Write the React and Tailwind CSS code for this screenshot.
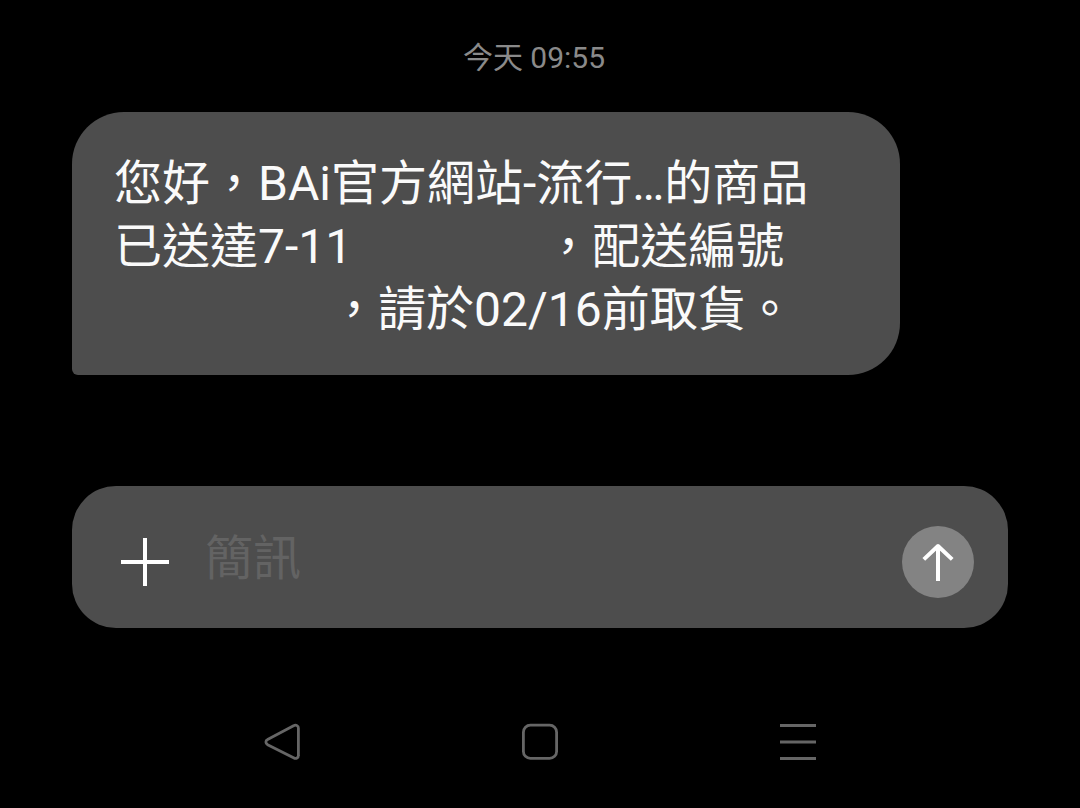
import React from 'react';

const PlusIcon = () => (
  <svg className="size-12" viewBox="0 0 48 48" fill="none" stroke="currentColor" strokeWidth="4" aria-hidden="true">
    <path d="M24 0v48M0 24h48" />
  </svg>
);

const ArrowUpIcon = () => (
  <svg className="size-10" viewBox="0 0 40 40" fill="none" stroke="currentColor" strokeWidth="4" aria-hidden="true">
    <path d="M20 39V4" />
    <path d="M5.8 17.4L20 4l14.2 13.4" strokeLinejoin="round" />
  </svg>
);

const BackIcon = () => (
  <svg className="size-10" viewBox="0 0 40 40" fill="none" stroke="currentColor" strokeWidth="2.8" aria-hidden="true">
    <path d="M32 3.6L5.6 17.4a3 3 0 0 0 0 5.4L32 36a2.9 2.9 0 0 0 4.4-2.6V6.2A2.9 2.9 0 0 0 32 3.6z" />
  </svg>
);

const HomeIcon = () => (
  <svg className="size-10" viewBox="0 0 40 40" fill="none" stroke="currentColor" strokeWidth="2.8" aria-hidden="true">
    <rect x="3.4" y="3.2" width="33.2" height="33.2" rx="7" />
  </svg>
);

const RecentsIcon = () => (
  <svg className="size-10" viewBox="0 0 40 40" fill="none" stroke="currentColor" strokeWidth="3" aria-hidden="true">
    <path d="M2 3.5h36M2 20h36M2 36.5h36" />
  </svg>
);

// Keeps room in a line for a part of the message that is hidden
const Hidden = ({ className }) => <span className={`inline-block ${className}`} />;

const MessageBubble = () => (
  <div className="w-fit rounded-[52px] rounded-bl-md bg-[#4d4d4d] pt-10 pr-[92px] pb-[34px] pl-[42px] text-[48px] leading-[63px] whitespace-nowrap text-[#fafafa]">
    <p>您好，BAi官方網站-流行…的商品</p>
    <p>
      已送達7-11
      <Hidden className="w-[192px]" />
      ，配送編號
    </p>
    <p>
      <Hidden className="w-[216px]" />
      ，請於02/16前取貨。
    </p>
  </div>
);

const Composer = () => (
  <form
    className="flex h-[142px] items-center rounded-[44px] bg-[#4d4d4d] pt-[10px] pr-[34px] pl-[49px]"
    onSubmit={(e) => e.preventDefault()}
  >
    <button type="button" aria-label="新增" className="text-white">
      <PlusIcon />
    </button>
    <input
      type="text"
      aria-label="簡訊"
      placeholder="簡訊"
      className="mx-9 mb-2 min-w-0 flex-1 bg-transparent text-[48px] leading-[63px] text-white outline-none placeholder:text-[#636363]"
    />
    <button
      type="submit"
      aria-label="傳送"
      className="flex size-[72px] items-center justify-center rounded-full bg-[#838383] text-white"
    >
      <ArrowUpIcon />
    </button>
  </form>
);

const NavigationBar = () => (
  <nav className="flex justify-center gap-[218px] text-[#666666]">
    <button type="button" aria-label="返回">
      <BackIcon />
    </button>
    <button type="button" aria-label="主畫面">
      <HomeIcon />
    </button>
    <button type="button" aria-label="最近使用">
      <RecentsIcon />
    </button>
  </nav>
);

const App = () => {
  return (
    <div className="flex min-h-screen flex-col bg-black px-[72px] pt-9 pb-[46px] font-['Roboto','Noto_Sans_CJK_TC',sans-serif]">
      <main lang="zh-Hant">
        <p className="pr-3 text-center text-[30px] leading-[44px] text-[#8a8a8a]">今天 09:55</p>
        <div className="mt-8">
          <MessageBubble />
        </div>
      </main>
      <div className="mt-auto">
        <Composer />
        <div className="mt-[94px]">
          <NavigationBar />
        </div>
      </div>
    </div>
  );
};

export default App;
